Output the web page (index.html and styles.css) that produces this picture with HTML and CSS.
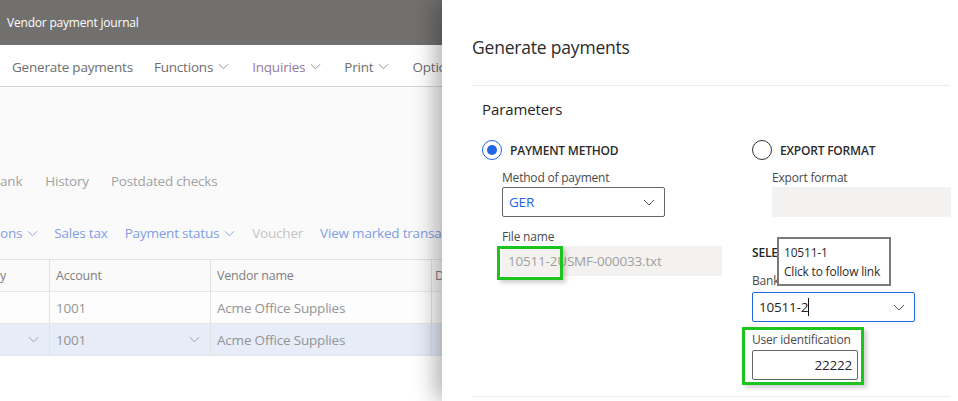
FILE: index.html
```html
<!DOCTYPE html>
<html>
<head>
<meta charset="utf-8">
<link rel="stylesheet" href="styles.css">
</head>
<body>
<div class="app">
  <div class="page">
    <div class="topbar"><span class="apptitle">Vendor payment journal</span></div>
    <div class="toolbar">
      <span class="tb">Generate payments</span>
      <span class="tb">Functions <svg class="chev" viewBox="0 0 12 7"><path d="M1 1 L6 6 L11 1"/></svg></span>
      <span class="tb purple">Inquiries <svg class="chev" viewBox="0 0 12 7"><path d="M1 1 L6 6 L11 1"/></svg></span>
      <span class="tb">Print <svg class="chev" viewBox="0 0 12 7"><path d="M1 1 L6 6 L11 1"/></svg></span>
      <span class="sep"></span>
      <span class="tb">Options</span>
    </div>
    <div class="content">
      <div class="tabs">
        <span class="tab first">ank</span>
        <span class="tab">History</span>
        <span class="tab">Postdated checks</span>
      </div>
      <div class="actions">
        <span class="act first">ons <svg class="chev" viewBox="0 0 12 7"><path d="M1 1 L6 6 L11 1"/></svg></span>
        <span class="act">Sales tax</span>
        <span class="act">Payment status <svg class="chev" viewBox="0 0 12 7"><path d="M1 1 L6 6 L11 1"/></svg></span>
        <span class="act disabled">Voucher</span>
        <span class="act">View marked transactions</span>
      </div>
      <div class="grid">
        <div class="row head">
          <div class="c c1">y</div>
          <div class="c c2">Account</div>
          <div class="c c3">Vendor name</div>
          <div class="c c4">D</div>
        </div>
        <div class="row">
          <div class="c c1"></div>
          <div class="c c2">1001</div>
          <div class="c c3">Acme Office Supplies</div>
          <div class="c c4"></div>
        </div>
        <div class="row sel">
          <div class="c c1 dd"><svg class="chev gchev" viewBox="0 0 12 7"><path d="M1 1 L6 6 L11 1"/></svg></div>
          <div class="c c2 dd">1001<svg class="chev gchev" viewBox="0 0 12 7"><path d="M1 1 L6 6 L11 1"/></svg></div>
          <div class="c c3">Acme Office Supplies</div>
          <div class="c c4"></div>
        </div>
      </div>
    </div>
  </div>

  <div class="panel">
    <div class="phead">Generate payments</div>
    <div class="section">
      <div class="stitle">Parameters</div>
      <div class="cols">
        <div class="col left">
          <div class="radio-row"><span class="radio on"></span><span class="rlabel">PAYMENT METHOD</span></div>
          <div class="field">
            <div class="flabel">Method of payment</div>
            <div class="select"><span class="val blue">GER</span><svg class="chev schev" viewBox="0 0 12 7"><path d="M1 1 L6 6 L11 1"/></svg></div>
          </div>
          <div class="field fname">
            <div class="flabel">File name</div>
            <div class="input ro wide"><span class="val grey">10511-2USMF-000033.txt</span></div>
            <div class="mark"></div>
          </div>
        </div>
        <div class="col right">
          <div class="radio-row"><span class="radio"></span><span class="rlabel">EXPORT FORMAT</span></div>
          <div class="field">
            <div class="flabel">Export format</div>
            <div class="input ro full"></div>
          </div>
          <div class="bankgrp">
            <div class="gtitle">SELECT BANK ACCOUNT</div>
            <div class="flabel">Bank account</div>
            <div class="select focus"><span class="val dark">10511-2</span><span class="caret"></span><svg class="chev schev" viewBox="0 0 12 7"><path d="M1 1 L6 6 L11 1"/></svg></div>
            <div class="hl">
              <div class="flabel">User identification</div>
              <div class="input uid"><span class="val dark">22222</span></div>
            </div>
            <div class="tooltip">
              <div>10511-1</div>
              <div>Click to follow link</div>
            </div>
          </div>
        </div>
      </div>
    </div>
  </div>
</div>
</body>
</html>
```

FILE: styles.css
```css
* { box-sizing: border-box; }
html, body { margin: 0; padding: 0; }
body {
  width: 958px;
  height: 401px;
  overflow: hidden;
  font-family: "Open Sans", "Noto Sans", sans-serif;
  background: #ffffff;
}
.app {
  display: flex;
  width: 958px;
  height: 401px;
}
.page {
  width: 442px;
  flex: none;
  overflow: hidden;
  background: #ffffff;
  display: flex;
  flex-direction: column;
}
.topbar {
  height: 45px;
  background: #71706e;
  display: flex;
  align-items: center;
  padding-left: 7px;
  flex: none;
}
.apptitle {
  color: #ffffff;
  font-size: 12px;
  letter-spacing: -0.2px;
}
.toolbar {
  height: 42px;
  background: #ffffff;
  border-bottom: 1px solid #d4d4d4;
  display: flex;
  align-items: center;
  padding-left: 12px;
  padding-top: 2px;
  white-space: nowrap;
  flex: none;
}
.tb {
  font-size: 13.5px;
  color: #6e6e6e;
  margin-right: 23px;
  display: inline-flex;
  align-items: center;
  gap: 5px;
  letter-spacing: -0.2px;
}
.tb:first-child { margin-right: 21px; }
.tb.purple { color: #957a9f; }
.sep {
  width: 1px;
  height: 32px;
  background: #e3e3e3;
  margin-right: 11px;
  margin-left: -11px;
}
.chev {
  width: 11px;
  height: 7px;
  fill: none;
  stroke: #8a8a8a;
  stroke-width: 1;
}
.content {
  background: #fafafa;
  height: 269px;
  flex: none;
  display: flex;
  flex-direction: column;
}
.tabs {
  display: flex;
  white-space: nowrap;
  padding-top: 85px;
  height: 104px;
}
.tab {
  font-size: 13.5px;
  color: #a2a2a2;
  margin-right: 22px;
  letter-spacing: -0.2px;
}
.tab.first { margin-right: 23px; }
.actions {
  display: flex;
  white-space: nowrap;
  padding-top: 33px;
  height: 71px;
}
.act {
  font-size: 13.5px;
  color: #819ee4;
  margin-right: 17px;
  display: inline-flex;
  align-items: center;
  gap: 5px;
  letter-spacing: -0.2px;
  height: 20px;
}
.act.first { margin-right: 16px; }
.act .chev { stroke: #819ee4; }
.act.disabled { color: #c4c4c4; margin-right: 17px; }
.grid {
  border-top: 1px solid #e2e2e2;
  width: 460px;
}
.row {
  display: flex;
  height: 32px;
  border-bottom: 1px solid #e6e6e6;
  background: #fdfdfd;
}
.row.head { background: #fafafa; height: 32px; }
.row.sel { background: #e6edf9; }
.c {
  border-right: 1px solid #e2e2e2;
  display: flex;
  align-items: center;
  padding-left: 6px;
  font-size: 13.5px;
  color: #949494;
  white-space: nowrap;
  letter-spacing: -0.2px;
}
.head .c { font-size: 12.5px; color: #808080; }
.c1 { width: 50px; padding-left: 0; }
.c2 { width: 161px; }
.c3 { width: 221px; }
.c4 { width: 28px; border-right: none; padding-left: 3px; }
.dd { justify-content: space-between; padding-right: 10px; }
.gchev { stroke: #9a9a9a; margin-left: auto; }
.c1.dd { padding-left: 0; }

.panel {
  width: 516px;
  flex: none;
  background: #ffffff;
  box-shadow: -6px 0 22px rgba(0,0,0,0.32);
  position: relative;
  z-index: 2;
  padding-left: 30px;
  padding-right: 8px;
}
.phead {
  height: 86px;
  border-bottom: 1px solid #ededed;
  font-size: 17.5px;
  color: #2b2b2b;
  display: flex;
  align-items: center;
  padding-top: 8px;
  letter-spacing: -0.2px;
}
.section {
  padding-left: 10px;
  height: 311px;
  border-bottom: 1px solid #eeeeee;
}
.stitle {
  font-size: 15px;
  color: #262626;
  padding-top: 13px;
  height: 54px;
  letter-spacing: -0.1px;
}
.cols {
  display: flex;
}
.col.left { width: 270px; flex: none; }
.col.right { flex: 1; position: relative; }
.radio-row {
  display: flex;
  align-items: center;
  height: 20px;
  gap: 8px;
}
.radio {
  width: 20px;
  height: 20px;
  border-radius: 50%;
  border: 1px solid #323232;
  flex: none;
  position: relative;
}
.radio.on {
  border-color: #2266e3;
}
.radio.on::after {
  content: "";
  position: absolute;
  left: 4px;
  top: 4px;
  width: 10px;
  height: 10px;
  border-radius: 50%;
  background: #2266e3;
}
.rlabel {
  font-size: 12px;
  font-weight: 600;
  color: #2b2b2b;
  letter-spacing: -0.2px;
}
.field {
  margin-left: 20px;
  margin-top: 9px;
}
.flabel {
  font-size: 12px;
  color: #4a4a4a;
  height: 18px;
  line-height: 18px;
  letter-spacing: -0.2px;
}
.select, .input {
  height: 30px;
  display: flex;
  align-items: center;
  padding-left: 6px;
}
.select {
  width: 163px;
  border: 1px solid #666666;
  border-radius: 2px;
  padding-right: 9px;
}
.select.focus { border-color: #2266e3; }
.schev { margin-left: auto; stroke: #555; width: 12px; }
.val { font-size: 13.5px; letter-spacing: -0.2px; }
.val.blue { color: #2266e3; }
.val.grey { color: #a0a0a0; }
.val.dark { color: #262626; }
.caret {
  width: 1px;
  height: 18px;
  background: #111;
  margin-left: 0;
}
.input.ro { background: #f3f2f1; }
.input.wide { width: 220px; }
.input.full { width: 179px; }
.fname { position: relative; margin-top: 11px; }
.mark {
  position: absolute;
  left: -5px;
  top: 18px;
  width: 66px;
  height: 34px;
  border: 3px solid #1ec31e;
  box-shadow: 3px 3px 4px rgba(0,0,0,0.18);
}
.bankgrp {
  margin-top: 26px;
}
.gtitle {
  font-size: 12px;
  font-weight: 600;
  color: #262626;
  height: 20px;
  line-height: 20px;
  letter-spacing: -0.2px;
}
.bankgrp .flabel { margin-top: 9px; height: 20px; line-height: 17px; }
.hl {
  margin-left: -10px;
  margin-top: 5px;
  width: 122px;
  border: 3px solid #1ec31e;
  padding: 1px 3px 2px 7px;
  box-shadow: 3px 3px 4px rgba(0,0,0,0.18);
}
.hl .flabel { height: 18px; line-height: 18px; margin-top: 0; margin-bottom: 1px; }
.input.uid {
  width: 106px;
  border: 1px solid #666666;
  border-radius: 2px;
  justify-content: flex-end;
  padding-right: 5px;
}
.tooltip {
  position: absolute;
  left: 25px;
  top: 97px;
  width: 114px;
  height: 49px;
  background: #ffffff;
  border: 2px solid #7a7a7a;
  padding: 4px 0 0 5px;
  font-size: 12px;
  color: #2b2b2b;
  line-height: 19px;
  letter-spacing: -0.2px;
}
```
